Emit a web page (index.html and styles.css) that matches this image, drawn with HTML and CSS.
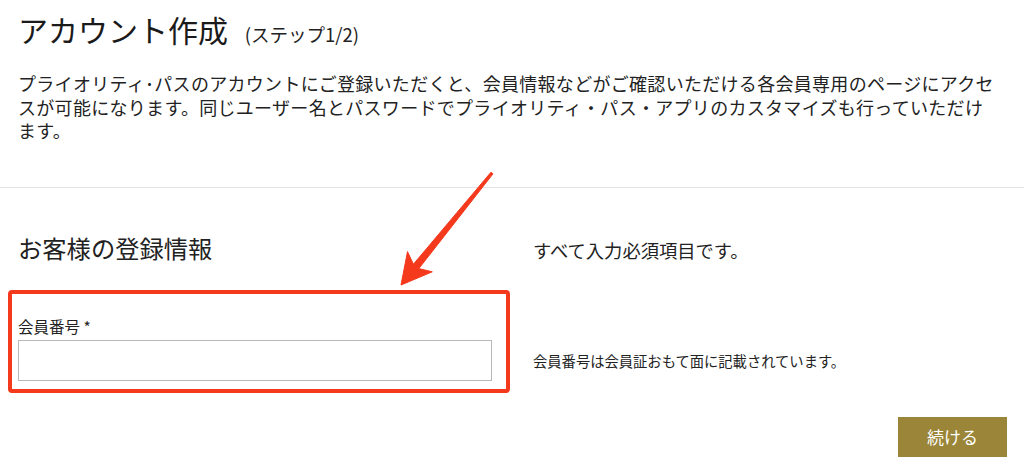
FILE: index.html
```html
<!DOCTYPE html>
<html lang="ja">
<head>
    <title>アカウント作成</title>
    <meta charset="utf-8">
    <meta name="viewport" content="width=device-width, initial-scale=1">
    <link rel="stylesheet" href="styles.css">
</head>
<body>
    <div class="intro">
        <h1 class="title">アカウント作成 <span class="step">(ステップ1/2)</span></h1>
        <p class="lead">プライオリティ･パスのアカウントにご登録いただくと、会員情報などがご確認いただける各会員専用のページにアクセスが可能になります。同じユーザー名とパスワードでプライオリティ・パス・アプリのカスタマイズも行っていただけ<span class="nowrap">ます。</span></p>
    </div>

    <hr class="divider">

    <form class="register">
        <h2 class="section-title">お客様の登録情報</h2>
        <p class="required-note">すべて入力必須項目です。</p>

        <div class="field">
            <label for="member-no">会員番号 *</label>
            <input id="member-no" type="text">
            <div class="highlight"></div>
        </div>
        <p class="help">会員番号は会員証おもて面に記載されています。</p>

        <div class="actions">
            <button type="button" class="next">続ける</button>
        </div>
    </form>

    <!-- annotation arrow -->
    <svg class="arrow" width="1024" height="467" viewBox="0 0 1024 467">
        <polygon points="491,172.2 413.4,264.2 407.5,251.6 401,285 432.3,271.8 418.8,268.6 493,173.8" fill="#f4391d" stroke="#f4391d" stroke-width="1" stroke-linejoin="round"/>
    </svg>
</body>
</html>
```

FILE: styles.css
```css
body {
    margin: 0;
    position: relative;
    font-family: "Noto Sans CJK JP", "Noto Sans", sans-serif;
    color: #222;
    background-color: #fff;
}
.intro {
    padding: 0 18px;
}
.title {
    margin: 9px 0 0;
    font-size: 30px;
    line-height: 40px;
    font-weight: 400;
    color: #1a1a1a;
}
.step {
    font-size: 18.5px;
    line-height: 20px;
    margin-left: 10px;
    color: #222;
}
.lead {
    width: 985px;
    margin: 23px 0 0;
    font-size: 18px;
    line-height: 23.5px;
    letter-spacing: 0.3px;
}
.nowrap {
    white-space: nowrap;
}
.divider {
    margin: 44px 0 0;
    border: none;
    border-top: 1px solid #e3e3e3;
}
.register {
    display: grid;
    grid-template-columns: 474px 1fr;
    column-gap: 41px;
    padding: 44px 17px 0 18px;
}
.section-title {
    margin: 0;
    font-size: 24.3px;
    line-height: 32px;
    font-weight: 400;
}
.required-note {
    margin: 0;
    align-self: center;
    font-size: 18.3px;
    line-height: 32px;
    padding-top: 2px;
}
.field {
    position: relative;
    margin-top: 50px;
    display: flex;
    flex-direction: column;
}
.field label {
    font-size: 15.5px;
    line-height: 20px;
    margin-bottom: 4px;
}
.field input {
    height: 41px;
    box-sizing: border-box;
    border: 1px solid #b8b8b8;
    border-radius: 0;
    padding: 0 10px;
    font-size: 16px;
    font-family: inherit;
}
.highlight {
    position: absolute;
    left: -10px;
    top: -26px;
    right: -18px;
    bottom: -12px;
    border: 4px solid #f4391d;
    border-radius: 4px;
    pointer-events: none;
}
.help {
    margin: 0;
    align-self: end;
    font-size: 14.3px;
    line-height: 41px;
}
.actions {
    grid-column: 1 / 3;
    display: flex;
    justify-content: flex-end;
    margin-top: 36px;
}
.next {
    width: 109px;
    height: 40px;
    border: none;
    background-color: #9a8538;
    color: #fff;
    font-family: inherit;
    font-size: 17px;
    cursor: pointer;
}
.arrow {
    position: absolute;
    top: 0;
    left: 0;
    pointer-events: none;
}
```
